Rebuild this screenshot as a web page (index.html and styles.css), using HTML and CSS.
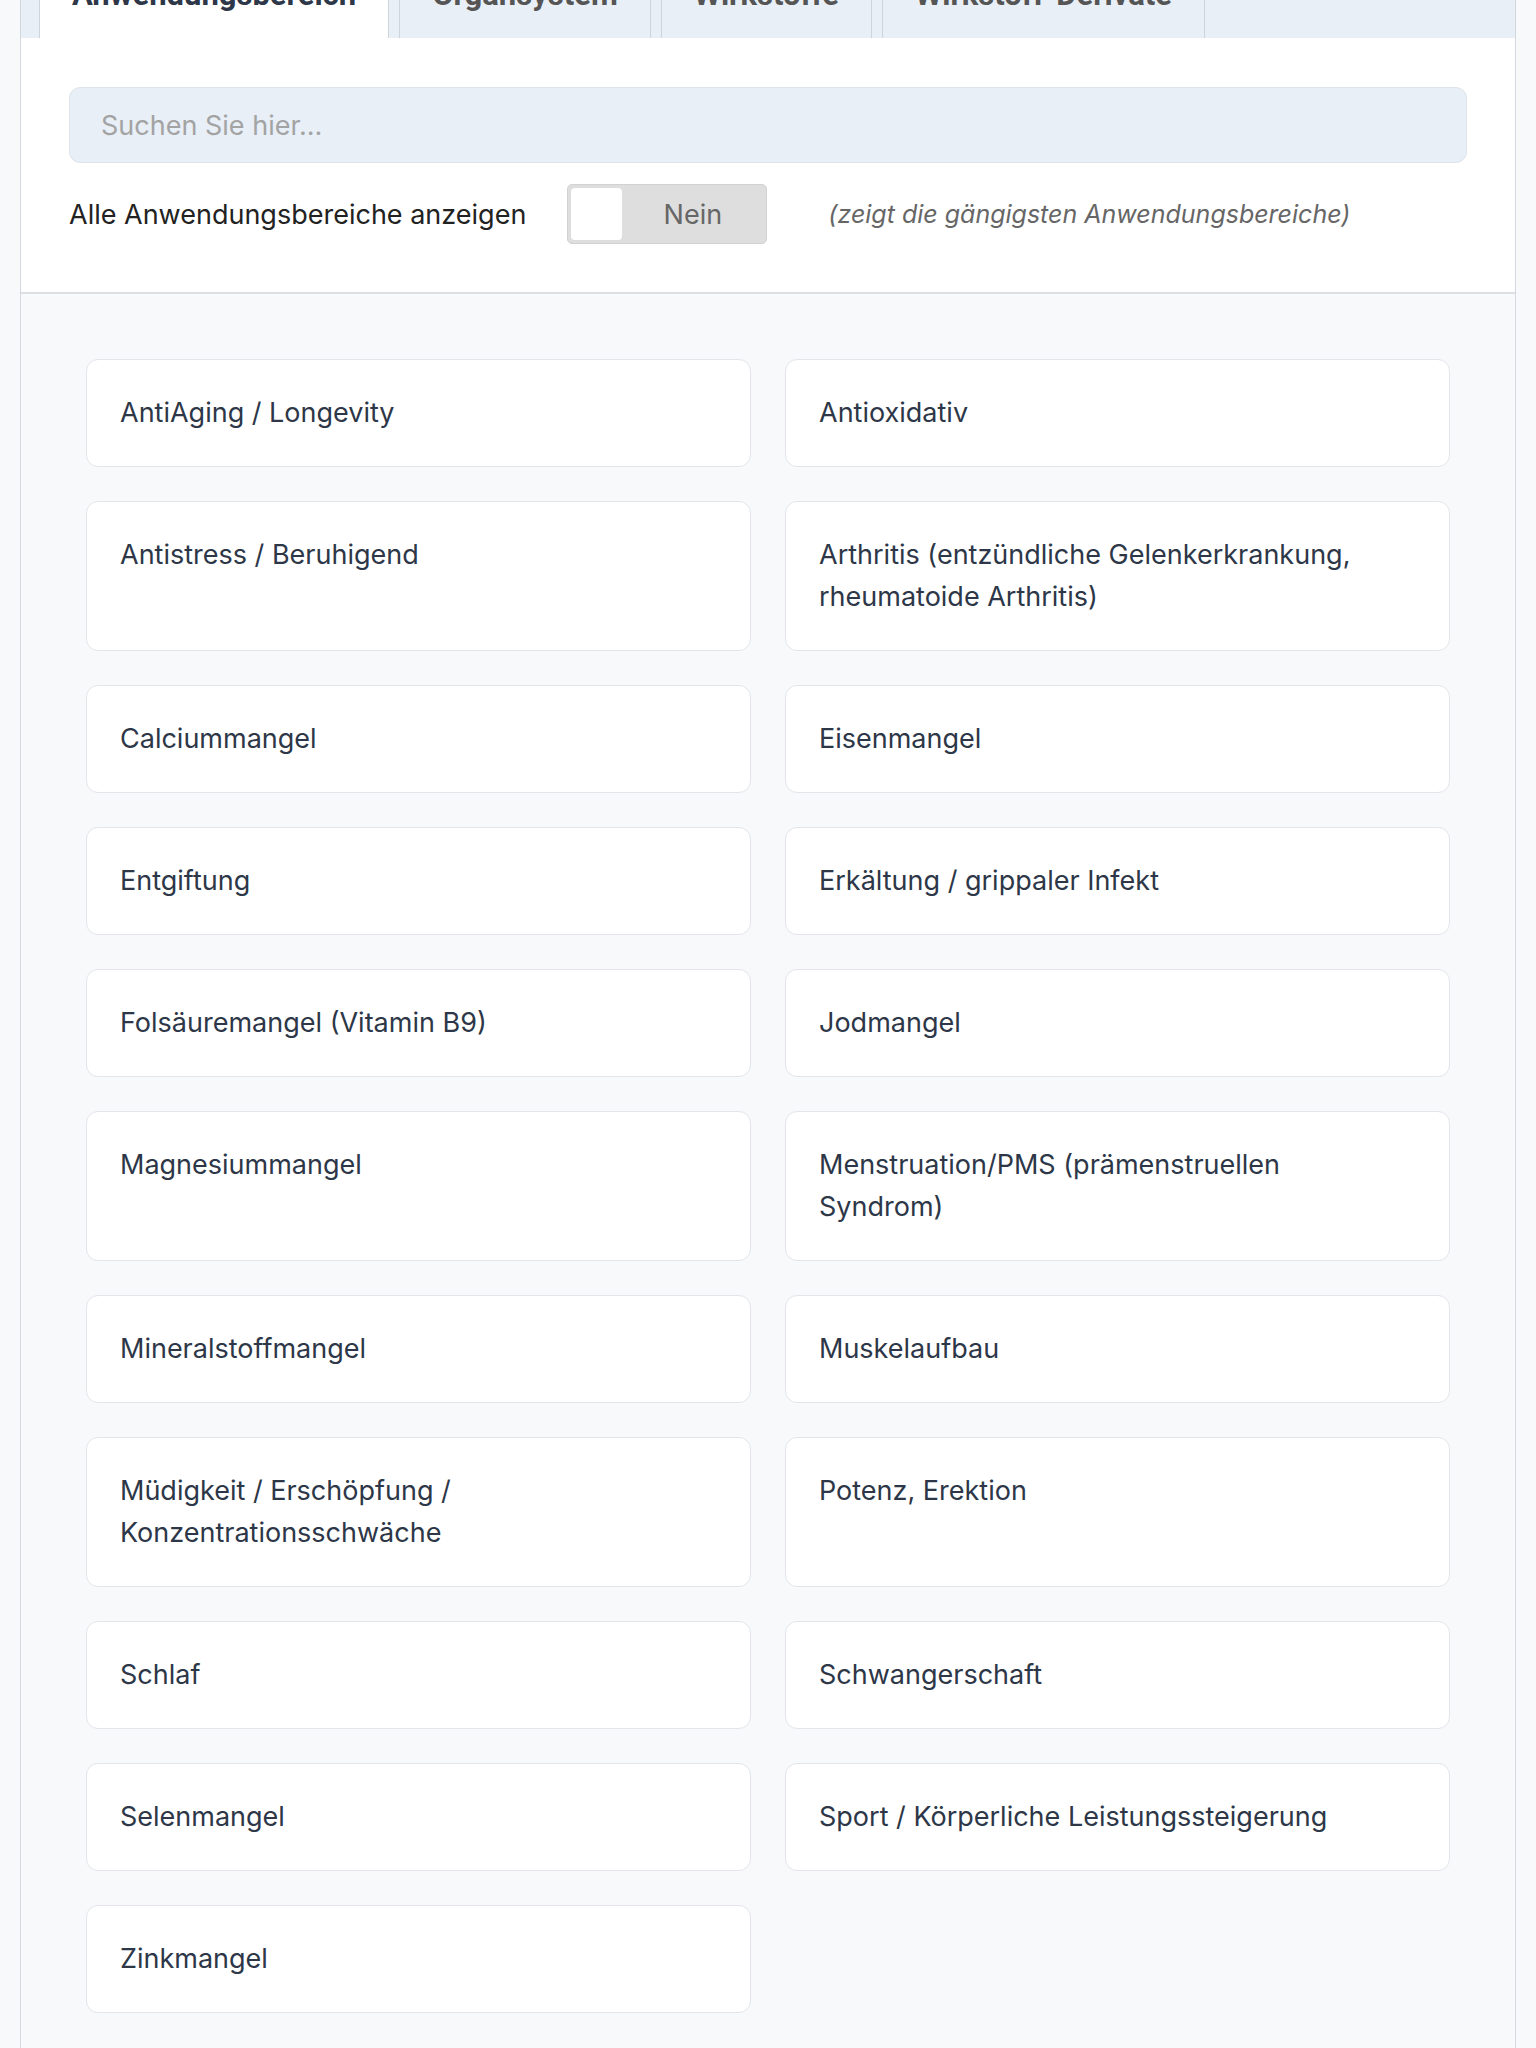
FILE: index.html
```html
<!DOCTYPE html>
<html lang="de">
<head>
  <meta charset="UTF-8">
  <title>Anwendungsbereiche</title>
  <link rel="stylesheet" href="styles.css">
</head>
<body>

  <div class="panel">
    <ul class="tabs">
      <li class="tab active">Anwendungsbereich</li>
      <li class="tab">Organsystem</li>
      <li class="tab">Wirkstoffe</li>
      <li class="tab">Wirkstoff-Derivate</li>
    </ul>

    <div class="filter">
      <input type="text" class="search" placeholder="Suchen Sie hier...">
      <div class="switch-row">
        <span class="switch-label">Alle Anwendungsbereiche anzeigen</span>
        <div class="switch">
          <span class="knob"></span>
          <span class="switch-text">Nein</span>
        </div>
        <span class="hint">(zeigt die gängigsten Anwendungsbereiche)</span>
      </div>
    </div>

    <div class="liste">
      <div class="card">AntiAging / Longevity</div>
      <div class="card">Antioxidativ</div>
      <div class="card">Antistress / Beruhigend</div>
      <div class="card">Arthritis (entzündliche Gelenkerkrankung, rheumatoide Arthritis)</div>
      <div class="card">Calciummangel</div>
      <div class="card">Eisenmangel</div>
      <div class="card">Entgiftung</div>
      <div class="card">Erkältung / grippaler Infekt</div>
      <div class="card">Folsäuremangel (Vitamin B9)</div>
      <div class="card">Jodmangel</div>
      <div class="card">Magnesiummangel</div>
      <div class="card">Menstruation/PMS (prämenstruellen Syndrom)</div>
      <div class="card">Mineralstoffmangel</div>
      <div class="card">Muskelaufbau</div>
      <div class="card">Müdigkeit / Erschöpfung / Konzentrationsschwäche</div>
      <div class="card">Potenz, Erektion</div>
      <div class="card">Schlaf</div>
      <div class="card">Schwangerschaft</div>
      <div class="card">Selenmangel</div>
      <div class="card">Sport / Körperliche Leistungssteigerung</div>
      <div class="card">Zinkmangel</div>
    </div>
  </div>

</body>
</html>
```

FILE: styles.css
```css
body {
  margin: 0;
  background-color: #f8f9fb;
  font-family: Inter, "Noto Sans", sans-serif;
  color: #2d3748;
}
.panel {
  margin: -36px 20px 0 20px;
  border-left: 1px solid #d3d7de;
  border-right: 1px solid #d3d7de;
  background-color: #fff;
}
.tabs {
  list-style: none;
  margin: 0;
  padding: 0 0 0 18px;
  display: flex;
  gap: 10px;
  background-color: #e8eff7;
}
.tab {
  padding: 16px 32px 28px 32px;
  line-height: 30px;
  font-family: Roboto, "Liberation Sans", sans-serif;
  font-size: 31px;
  font-weight: bold;
  color: #555;
  border-left: 1px solid #cfd4db;
  border-right: 1px solid #cfd4db;
}
.tab.active {
  background-color: #fff;
  color: #2d3748;
}
.filter {
  padding: 49px 48px 48px 48px;
  border-bottom: 2px solid #dcdfe4;
}
.search {
  display: block;
  box-sizing: border-box;
  width: 100%;
  height: 76px;
  padding: 0 31px;
  font-family: Inter, "Noto Sans", sans-serif;
  font-size: 27px;
  color: #333;
  background-color: #e8eff7;
  border: 1px solid #dfe4ea;
  border-radius: 11px;
  outline: none;
}
.search::placeholder {
  color: #a3a3a3;
}
.switch-row {
  display: flex;
  align-items: center;
  margin-top: 21px;
}
.switch-label {
  font-size: 27px;
  color: #222;
}
.switch {
  display: flex;
  align-items: center;
  box-sizing: border-box;
  width: 200px;
  height: 60px;
  margin-left: 41px;
  padding: 3px;
  background-color: #dedede;
  border: 1px solid #d2d2d2;
  border-radius: 5px;
}
.knob {
  width: 51px;
  height: 52px;
  background-color: #fff;
  border-radius: 4px;
}
.switch-text {
  flex: 1;
  text-align: center;
  font-size: 27px;
  color: #666;
}
.hint {
  margin-left: 61px;
  font-size: 25px;
  font-style: italic;
  color: #666;
}
.liste {
  display: grid;
  grid-template-columns: 1fr 1fr;
  gap: 34px;
  padding: 65px;
  background-color: #f8f9fb;
}
.card {
  padding: 32px 42px 32px 33px;
  line-height: 42px;
  font-size: 27px;
  background-color: #fff;
  border: 1px solid #e3e5ea;
  border-radius: 12px;
}
```
